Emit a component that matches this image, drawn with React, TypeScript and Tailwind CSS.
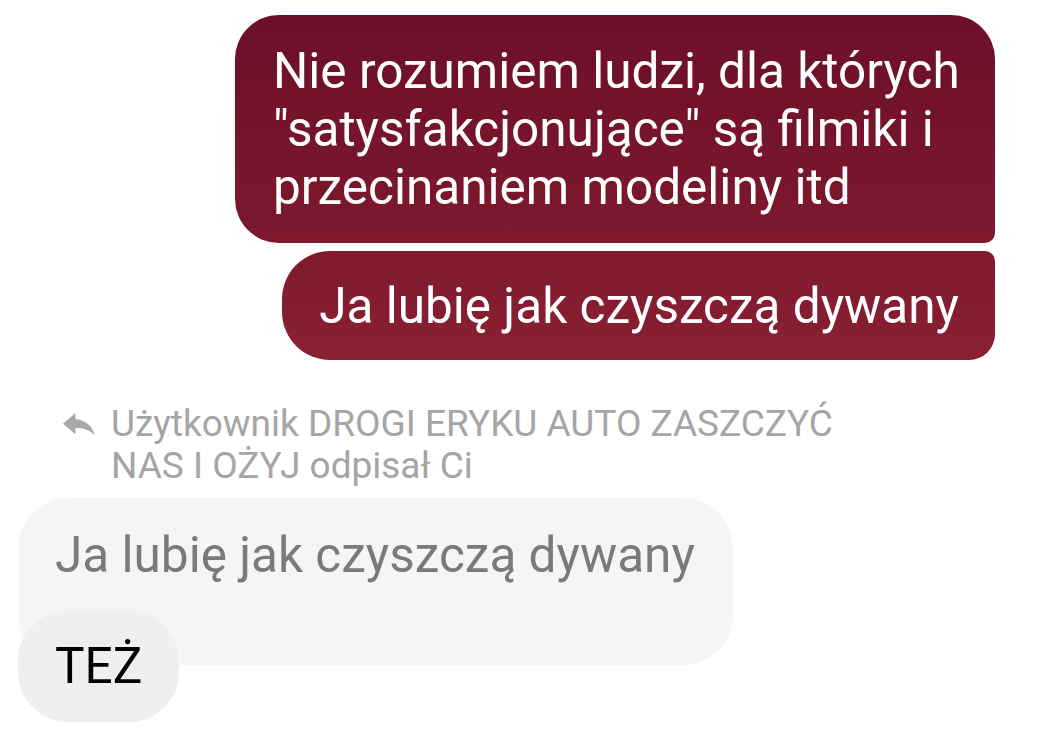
export default function App() {
    const font = { fontFamily: 'Roboto, "Noto Sans", sans-serif' };

    return (
        <div className="w-[1060px] h-[736px] bg-white overflow-hidden flex flex-col" style={font}>
            {/* wysłane */}
            <div className="flex flex-col items-end gap-2 pt-[15px] pr-[65px]">
                <div className="max-w-[760px] rounded-[44px] rounded-br-[10px] bg-gradient-to-b from-[#6c0f29] to-[#7e192e] pl-[38px] pr-[30px] pt-[27px] pb-[27px] text-[49.5px] leading-[58px] text-white">
                    Nie rozumiem ludzi, dla których "satysfakcjonujące" są filmiki i przecinaniem modeliny itd
                </div>
                <div className="rounded-[48px] rounded-tr-[10px] rounded-br-[26px] bg-gradient-to-b from-[#7f1a2f] to-[#8a2033] pl-[37px] pr-[36px] pt-[26px] pb-[25px] text-[49.5px] leading-[58px] text-white">
                    Ja lubię jak czyszczą dywany
                </div>
            </div>

            {/* odpowiedź */}
            <div className="flex items-start gap-[16px] pl-[63px] mt-[43px]">
                <svg viewBox="3 5 18 15.1" preserveAspectRatio="none" className="w-[32px] h-[23px] mt-[10px] fill-[#a8a8a8] shrink-0">
                    <path d="M10 9V5l-7 7 7 7v-4.1c5 0 8.5 1.6 11 5.1-1-5-4-10-11-11z" />
                </svg>
                <div className="w-[740px] text-[37px] leading-[42px] text-[#a5a5a5]">
                    Użytkownik DROGI ERYKU AUTO ZASZCZYĆ NAS I OŻYJ odpisał Ci
                </div>
            </div>

            <div className="flex flex-col items-start pl-[18px] mt-[11px]">
                <div className="rounded-[50px] bg-[#f5f5f5] pl-[37px] pr-[38px] pt-[28px] pb-[81px] text-[49.5px] leading-[58px] text-[#7a7a7a]">
                    Ja lubię jak czyszczą dywany
                </div>
                <div className="-mt-[54px] rounded-[50px] bg-[#efefef] px-[37px] pt-[26px] pb-[27px] text-[49.5px] leading-[58px] text-black">
                    TEŻ
                </div>
            </div>
        </div>
    );
}
